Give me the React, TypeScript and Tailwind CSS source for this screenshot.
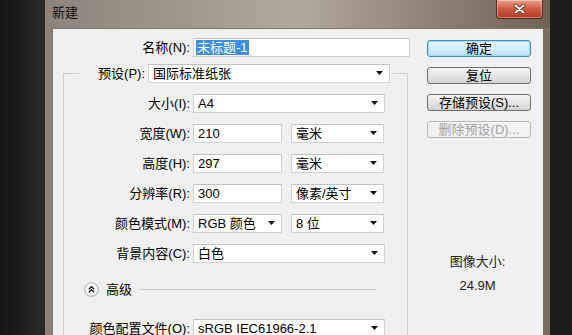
import React from "react";

function Arrow() {
  return (
    <svg width="7" height="4" viewBox="0 0 7 4" className="shrink-0">
      <path d="M0 0H7L3.5 4Z" fill="#111" />
    </svg>
  );
}

function Select({ value, w }: { value: string; w: string }) {
  return (
    <div className={`${w} h-[19px] bg-white border border-[#d2d2d2] border-t-[#c2c2c2] flex items-center justify-between pl-[4px] pr-[6px] leading-none`}>
      <span>{value}</span>
      <Arrow />
    </div>
  );
}

function Input({ value, w }: { value: string; w: string }) {
  return (
    <div className={`${w} h-[19px] bg-white border border-[#d2d2d2] border-t-[#c2c2c2] flex items-center pl-[4px] leading-none`}>
      {value}
    </div>
  );
}

function Row({ label, children }: { label: string; children: React.ReactNode }) {
  return (
    <div className="h-[30px] flex items-center">
      <div className="w-[126px] text-right leading-none">{label}</div>
      <div className="ml-[3px] flex items-center gap-[9px]">{children}</div>
    </div>
  );
}

function Button({ label, primary, disabled }: { label: string; primary?: boolean; disabled?: boolean }) {
  const look = primary
    ? "border-[#3d8fb4] bg-gradient-to-b from-[#eaf6fd] via-[#d5eefb] to-[#bfe3f5] shadow-[inset_0_0_0_1px_#9fdcf0]"
    : disabled
    ? "border-[#b8b8b8] bg-[#f2f2f2] text-[#a3a3a3]"
    : "border-[#707070] bg-gradient-to-b from-[#f4f4f4] via-[#e6e6e6] to-[#d3d3d3]";
  return (
    <div className={`w-[104px] h-[17px] rounded-[3px] border flex items-center justify-center leading-none ${look}`}>
      {label}
    </div>
  );
}

export default function App() {
  return (
    <div className="w-[572px] h-[335px] overflow-hidden flex bg-[#1c1c1c] text-[13px] text-black font-['Liberation_Sans','Noto_Sans_CJK_SC',sans-serif]">
      {/* dark desktop left */}
      <div className="w-[45px] shrink-0 bg-gradient-to-r from-[#141414] via-[#1e1e1e] to-[#2c2a28]" />

      {/* window */}
      <div className="w-[505px] shrink-0 flex flex-col bg-gradient-to-r from-[#8a8077] via-[#a89c90] to-[#7a6c5f]">
        {/* title bar */}
        <div className="h-[28px] shrink-0 flex items-start bg-gradient-to-r from-[#8d837a] via-[#b3a89c] to-[#6f6254]">
          <div className="pl-[7px] pt-[6px] leading-none text-[13px] text-[#111]">新建</div>
          <div className="ml-auto mr-[7px] w-[47px] h-[19px] rounded-b-[4px] border border-t-0 border-[#5a2a20] bg-gradient-to-b from-[#e8a08e] via-[#cc5a41] to-[#b33a24] flex items-center justify-center shadow-[inset_0_0_0_1px_rgba(255,255,255,0.35)]">
            <svg width="11" height="10" viewBox="0 0 11 10">
              <path d="M1.5 1.5L9.5 8.5M9.5 1.5L1.5 8.5" stroke="#5a2418" strokeWidth="3.6" strokeLinecap="round" />
              <path d="M1.5 1.5L9.5 8.5M9.5 1.5L1.5 8.5" stroke="#fff" strokeWidth="2" strokeLinecap="round" />
            </svg>
          </div>
        </div>

        {/* content */}
        <div className="flex-1 mx-[7px] flex bg-[#f0f0f0] shadow-[inset_1px_1px_0_#7d756d]">
          {/* left column */}
          <div className="w-[360px] shrink-0 flex flex-col">
            <div className="mt-[9px] h-[20px] flex items-center">
              <div className="w-[138px] text-right leading-none">名称(N):</div>
              <div className="ml-[3px] w-[217px] h-[19px] bg-white border border-[#d2d2d2] border-t-[#c2c2c2] flex items-center pl-[2px]">
                <span className="bg-[#3d8ee0] text-white leading-[15px] px-[1px]">未标题-1</span>
              </div>
            </div>

            {/* group box */}
            <div className="mt-[1px] ml-[11px] w-[345px] flex flex-col">
              <div className="h-[30px] flex">
                <div className="w-[16px] mt-[15px] border-t border-l border-[#cfcfcf]" />
                <div className="w-[66px] flex items-center justify-end leading-none">预设(P):</div>
                <div className="ml-[3px] self-center">
                  <Select value="国际标准纸张" w="w-[242px]" />
                </div>
                <div className="ml-[3px] flex-1 mt-[15px] border-t border-r border-[#cfcfcf]" />
              </div>
              <div className="border-l border-r border-[#cfcfcf] flex flex-col">
                <Row label="大小(I):">
                  <Select value="A4" w="w-[192px]" />
                </Row>
                <Row label="宽度(W):">
                  <Input value="210" w="w-[89px]" />
                  <Select value="毫米" w="w-[93px]" />
                </Row>
                <Row label="高度(H):">
                  <Input value="297" w="w-[89px]" />
                  <Select value="毫米" w="w-[93px]" />
                </Row>
                <Row label="分辨率(R):">
                  <Input value="300" w="w-[89px]" />
                  <Select value="像素/英寸" w="w-[93px]" />
                </Row>
                <Row label="颜色模式(M):">
                  <Select value="RGB 颜色" w="w-[89px]" />
                  <Select value="8 位" w="w-[93px]" />
                </Row>
                <Row label="背景内容(C):">
                  <Select value="白色" w="w-[192px]" />
                </Row>

                {/* advanced */}
                <div className="h-[42px] flex items-center pl-[20px] pr-[31px]">
                  <svg width="15" height="15" viewBox="0 0 15 15" className="shrink-0">
                    <circle cx="7.5" cy="7.5" r="6.8" fill="#f7f7f7" stroke="#a9a9a9" />
                    <path d="M4.8 7.2L7.5 4.7L10.2 7.2M4.8 10.2L7.5 7.7L10.2 10.2" fill="none" stroke="#222" strokeWidth="1.3" />
                  </svg>
                  <span className="ml-[7px] leading-none">高级</span>
                  <div className="ml-[7px] flex-1 h-px bg-[#cfcfcf]" />
                </div>

                <div className="h-[36px] flex items-center">
                  <div className="w-[126px] text-right leading-none">颜色配置文件(O):</div>
                  <div className="ml-[3px]">
                    <Select value="sRGB IEC61966-2.1" w="w-[192px]" />
                  </div>
                </div>
              </div>
            </div>
          </div>

          {/* right column */}
          <div className="flex-1 flex flex-col">
            <div className="pt-[12px] pl-[15px] flex flex-col gap-[10px]">
              <Button label="确定" primary />
              <Button label="复位" />
              <Button label="存储预设(S)..." />
              <Button label="删除预设(D)..." disabled />
            </div>
            <div className="mt-[116px] flex flex-col items-center text-[#222] leading-[16px]">
              <div>图像大小:</div>
              <div className="mt-[8px]">24.9M</div>
            </div>
          </div>
        </div>
      </div>

      {/* dark desktop right */}
      <div className="flex-1 bg-[#1d1d1d]" />
    </div>
  );
}
